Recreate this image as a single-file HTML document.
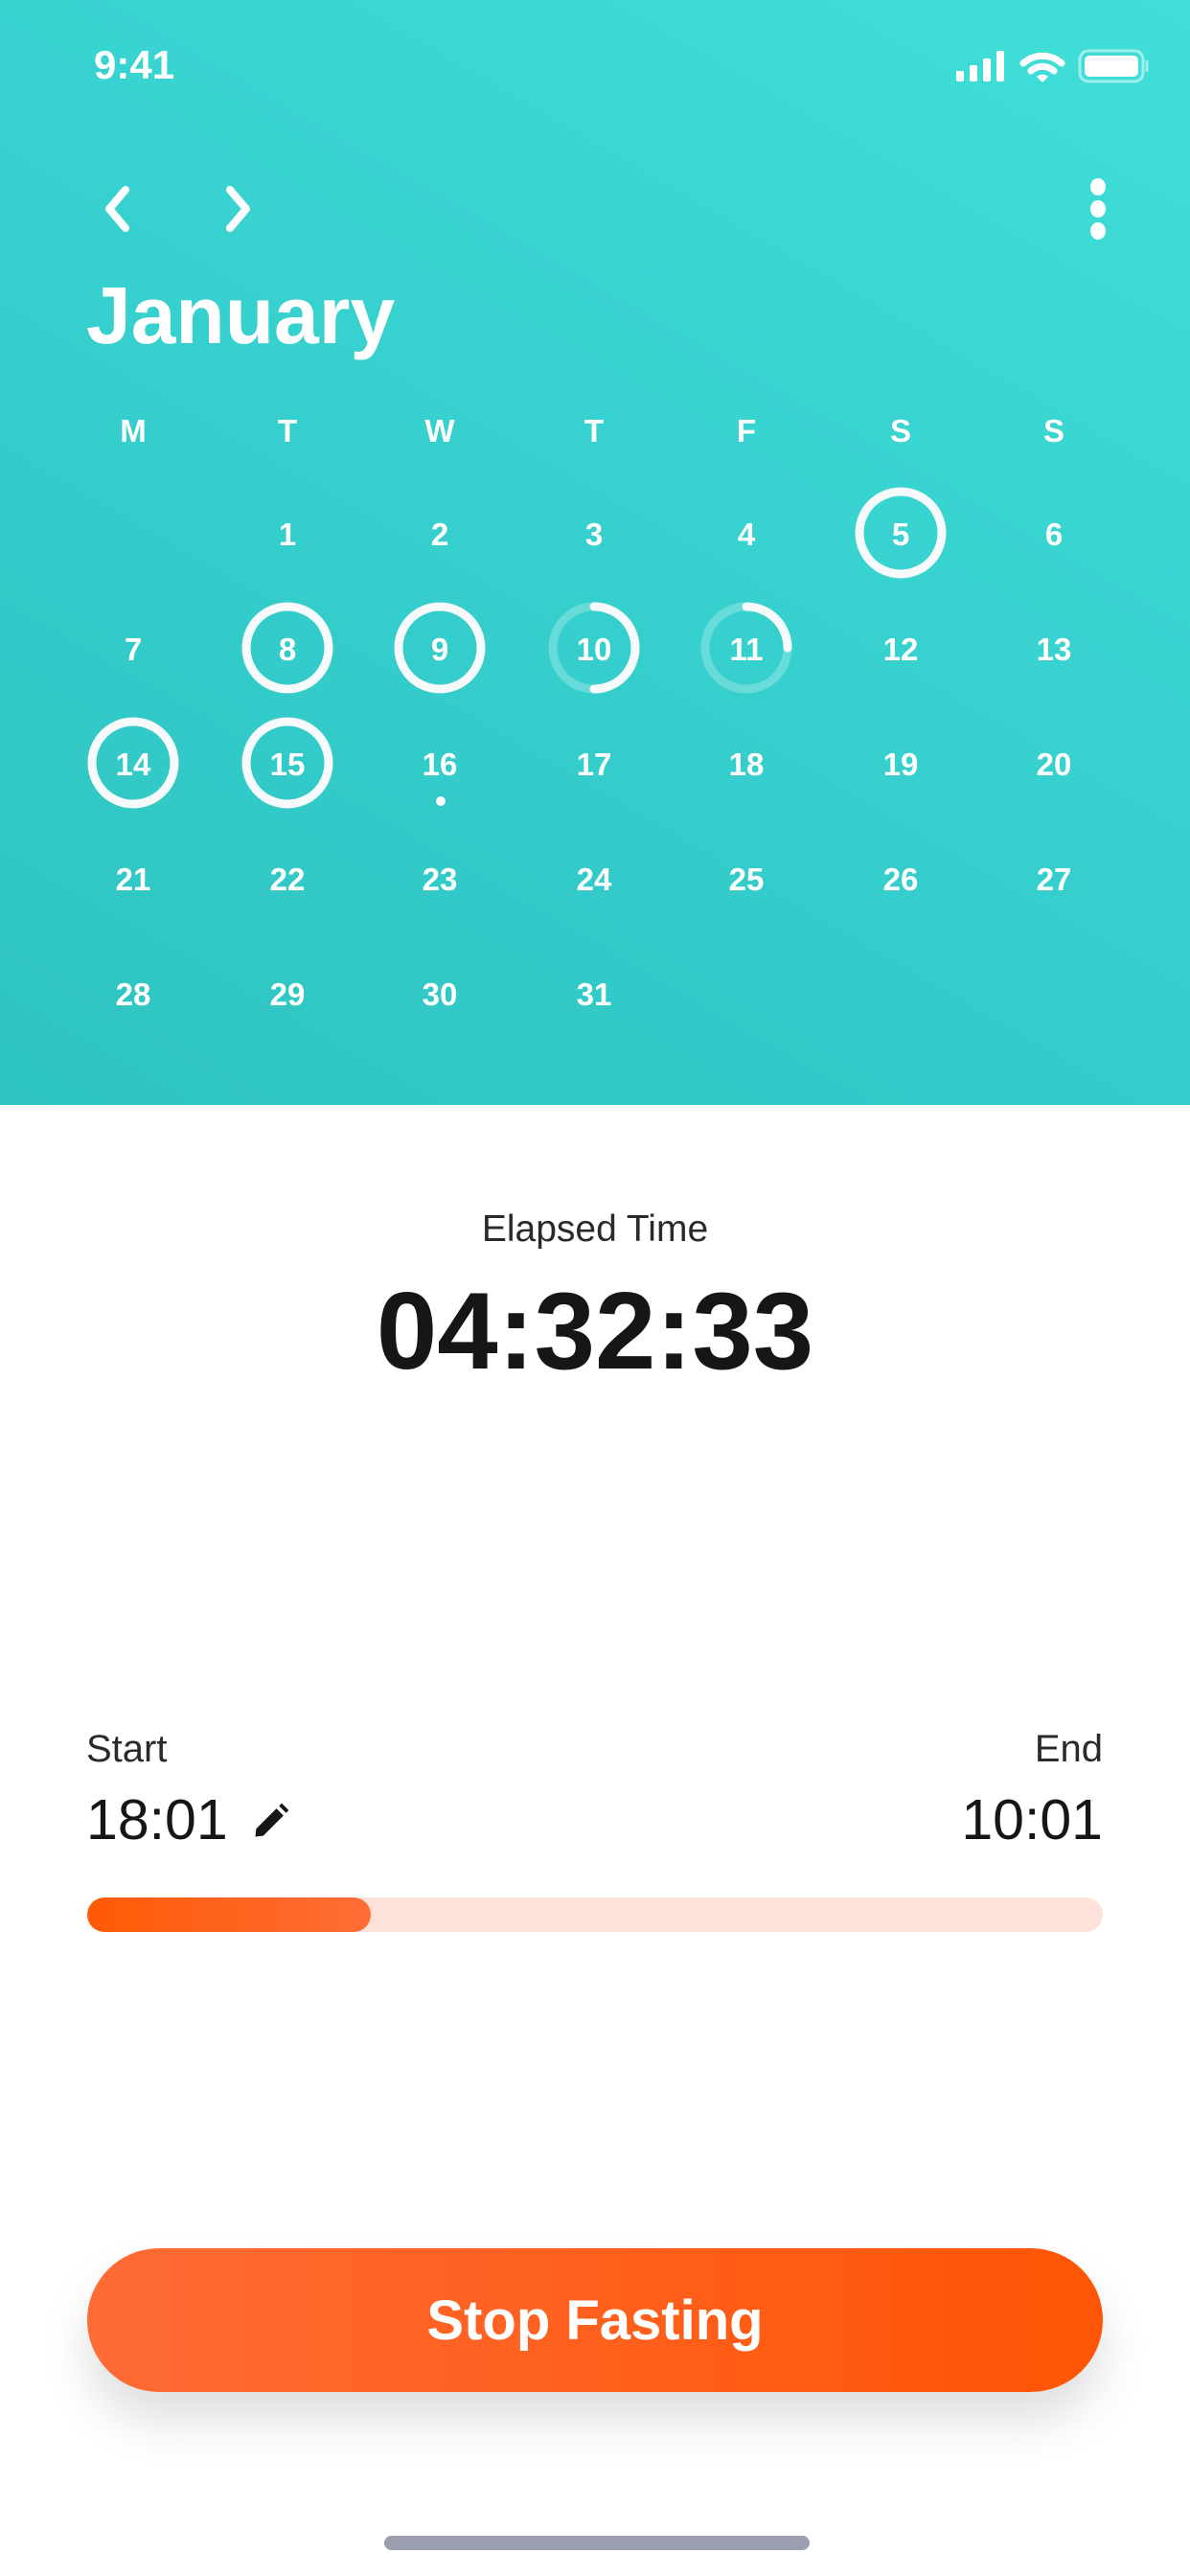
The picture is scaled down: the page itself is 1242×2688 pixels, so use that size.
<!DOCTYPE html>
<html><head><meta charset="utf-8"><style>
html,body{margin:0;padding:0;width:1242px;height:2688px;overflow:hidden;background:#fff;font-family:"Liberation Sans",sans-serif}
.hdr{position:absolute;left:0;top:0;width:1242px;height:1153px;background:linear-gradient(210deg,#40DFD8 0%,#36D0CE 50%,#2EC3C1 100%)}
.t{position:absolute;white-space:nowrap}
</style></head><body>
<div class="hdr"></div>
<svg width="1242" height="1153" style="position:absolute;left:0;top:0" font-family="Liberation Sans, sans-serif">
<text x="98" y="82" fill="#fff" font-size="42" font-weight="bold">9:41</text>
<g fill="#fff">
<rect x="998" y="74" width="8" height="11" rx="2"/><rect x="1012" y="68" width="8" height="17" rx="2"/><rect x="1026" y="61" width="8" height="24" rx="2"/><rect x="1040" y="53" width="8" height="32" rx="2"/>
</g>
<g fill="none" stroke="#fff" stroke-width="7" stroke-linecap="round">
<path d="M1068 66 A30 30 0 0 1 1108 66"/><path d="M1076 74 A18 18 0 0 1 1100 74"/>
</g>
<path d="M1082 80 L1088 86 L1094 80 A9 9 0 0 0 1082 80Z" fill="#fff"/>
<rect x="1127" y="53" width="66" height="32" rx="9" fill="none" stroke="#fff" stroke-opacity="0.5" stroke-width="3"/>
<rect x="1132" y="58" width="56" height="22" rx="5" fill="#fff"/>
<path d="M1197 63 v12" stroke="#fff" stroke-opacity="0.5" stroke-width="3"/>
<g fill="none" stroke="#fff" stroke-width="8" stroke-linecap="round" stroke-linejoin="round">
<path d="M131 198 L114 218 L131 238"/><path d="M240 198 L257 218 L240 238"/>
</g>
<g fill="#fff"><ellipse cx="1146" cy="195" rx="8" ry="9"/><ellipse cx="1146" cy="218" rx="8" ry="9"/><ellipse cx="1146" cy="241" rx="8" ry="9"/></g>
<text x="90" y="358" fill="#fff" font-size="84" font-weight="bold">January</text>
<g fill="#fff" font-size="33" font-weight="bold" text-anchor="middle">
<text x="139" y="461">M</text><text x="300" y="461">T</text><text x="459" y="461">W</text><text x="620" y="461">T</text><text x="779" y="461">F</text><text x="940" y="461">S</text><text x="1100" y="461">S</text>
<text x="300" y="569">1</text><text x="459" y="569">2</text><text x="620" y="569">3</text><text x="779" y="569">4</text><text x="940" y="569">5</text><text x="1100" y="569">6</text>
<text x="139" y="689">7</text><text x="300" y="689">8</text><text x="459" y="689">9</text><text x="620" y="689">10</text><text x="779" y="689">11</text><text x="940" y="689">12</text><text x="1100" y="689">13</text>
<text x="139" y="809">14</text><text x="300" y="809">15</text><text x="459" y="809">16</text><text x="620" y="809">17</text><text x="779" y="809">18</text><text x="940" y="809">19</text><text x="1100" y="809">20</text>
<text x="139" y="929">21</text><text x="300" y="929">22</text><text x="459" y="929">23</text><text x="620" y="929">24</text><text x="779" y="929">25</text><text x="940" y="929">26</text><text x="1100" y="929">27</text>
<text x="139" y="1049">28</text><text x="300" y="1049">29</text><text x="459" y="1049">30</text><text x="620" y="1049">31</text>
</g>
<g fill="none" stroke="#F6FAFA" stroke-width="9">
<circle cx="940" cy="556" r="43"/>
<circle cx="300" cy="676" r="43"/><circle cx="459" cy="676" r="43"/>
<circle cx="139" cy="796" r="43"/><circle cx="300" cy="796" r="43"/>
</g>
<g fill="none" stroke="#fff" stroke-opacity="0.25" stroke-width="9">
<circle cx="620" cy="676" r="43"/><circle cx="779" cy="676" r="43"/>
</g>
<g fill="none" stroke="#F6FAFA" stroke-width="9" stroke-linecap="round">
<path d="M620 633 A43 43 0 0 1 620 719"/>
<path d="M779 633 A43 43 0 0 1 822 676"/>
</g>
<circle cx="460" cy="836" r="5" fill="#fff"/>
</svg>
<div class="t" style="left:0;width:1242px;text-align:center;top:1261px;font-size:39px;color:#2a2a2a">Elapsed Time</div>
<div class="t" style="left:0;width:1242px;text-align:center;top:1324px;font-size:114px;color:#161616;font-weight:bold">04:32:33</div>
<div class="t" style="left:90px;top:1803px;font-size:40px;color:#2a2a2a">Start</div>
<div class="t" style="right:91px;top:1803px;font-size:40px;color:#2a2a2a">End</div>
<div class="t" style="left:90px;top:1865px;font-size:59px;color:#161616">18:01</div>
<div class="t" style="right:91px;top:1865px;font-size:59px;color:#161616">10:01</div>
<svg width="44" height="44" style="position:absolute;left:261px;top:1878px" viewBox="0 0 24 24"><path d="M3 21 L3.5 16.5 L15 5 L19 9 L7.5 20.5Z M16.5 3.5 L18 2 L22 6 L20.5 7.5Z" fill="#161616"/></svg>
<div style="position:absolute;left:91px;top:1980px;width:1060px;height:36px;border-radius:18px;background:#FEE1D8"></div>
<div style="position:absolute;left:91px;top:1980px;width:296px;height:36px;border-radius:18px;background:linear-gradient(90deg,#FF5A05,#FF6D36)"></div>
<div style="position:absolute;left:91px;top:2346px;width:1060px;height:150px;border-radius:75px;background:linear-gradient(90deg,#FF6B35,#FF5505);box-shadow:0 30px 50px rgba(0,0,0,0.13)"></div>
<div class="t" style="left:91px;width:1060px;text-align:center;top:2388px;font-size:58px;color:#fff;font-weight:bold">Stop Fasting</div>
<div style="position:absolute;left:401px;top:2646px;width:444px;height:15px;border-radius:8px;background:#9B9EAE"></div>
</body></html>
